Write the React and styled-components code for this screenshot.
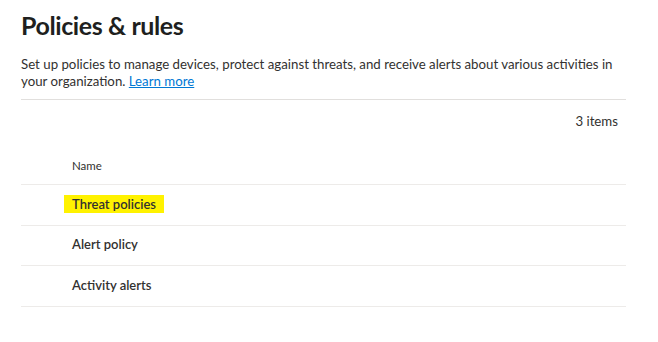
import React from 'react';
import styled, { createGlobalStyle } from 'styled-components';

const Global = createGlobalStyle`
    body {
        margin: 0;
        background: #ffffff;
        font-family: Lato, "Open Sans", sans-serif;
        color: #323130;
    }
`;

const Page = styled.div`
    width: 605px;
    padding: 8px 0 0 21px;
`;

const Title = styled.h1`
    margin: 0;
    font-size: 25px;
    line-height: 34px;
    font-weight: 700;
    letter-spacing: -0.4px;
    color: #201f1e;
`;

const Intro = styled.p`
    margin: 14px 0 0;
    font-size: 13.25px;
    line-height: 17px;
    padding-bottom: 9px;
    border-bottom: 1px solid #e1dfdd;
`;

const Link = styled.a`
    color: #0078d4;
    text-decoration: underline;
`;

const Count = styled.div`
    display: flex;
    justify-content: flex-end;
    padding-right: 8px;
    margin-top: 13px;
    font-size: 13.25px;
    line-height: 17px;
`;

const Table = styled.div`
    margin-top: 16px;
    display: flex;
    flex-direction: column;
`;

const HeaderRow = styled.div`
    height: 38px;
    display: flex;
    align-items: center;
    padding-left: 51px;
    font-size: 11.5px;
    border-bottom: 1px solid #edebe9;
`;

const Row = styled.div`
    height: 40.5px;
    display: flex;
    align-items: center;
    padding: 0 0 2px 43px;
    box-sizing: border-box;
    font-size: 13px;
    font-weight: 600;
    color: #323130;
    border-bottom: 1px solid #edebe9;
`;

const Cell = styled.span`
    padding: 1px 8px;
    background: ${p => (p.$marked ? '#fff200' : 'transparent')};
`;

const rows = ['Threat policies', 'Alert policy', 'Activity alerts'];

const App = () => {
    return (
        <>
            <Global />
            <Page>
                <Title>Policies &amp; rules</Title>
                <Intro>
                    Set up policies to manage devices, protect against threats, and receive alerts about various activities in your organization. <Link href="#">Learn more</Link>
                </Intro>
                <Count>3 items</Count>
                <Table>
                    <HeaderRow>Name</HeaderRow>
                    {rows.map((r, i) => (
                        <Row key={r}>
                            <Cell $marked={i === 0}>{r}</Cell>
                        </Row>
                    ))}
                </Table>
            </Page>
        </>
    );
};

export default App;
